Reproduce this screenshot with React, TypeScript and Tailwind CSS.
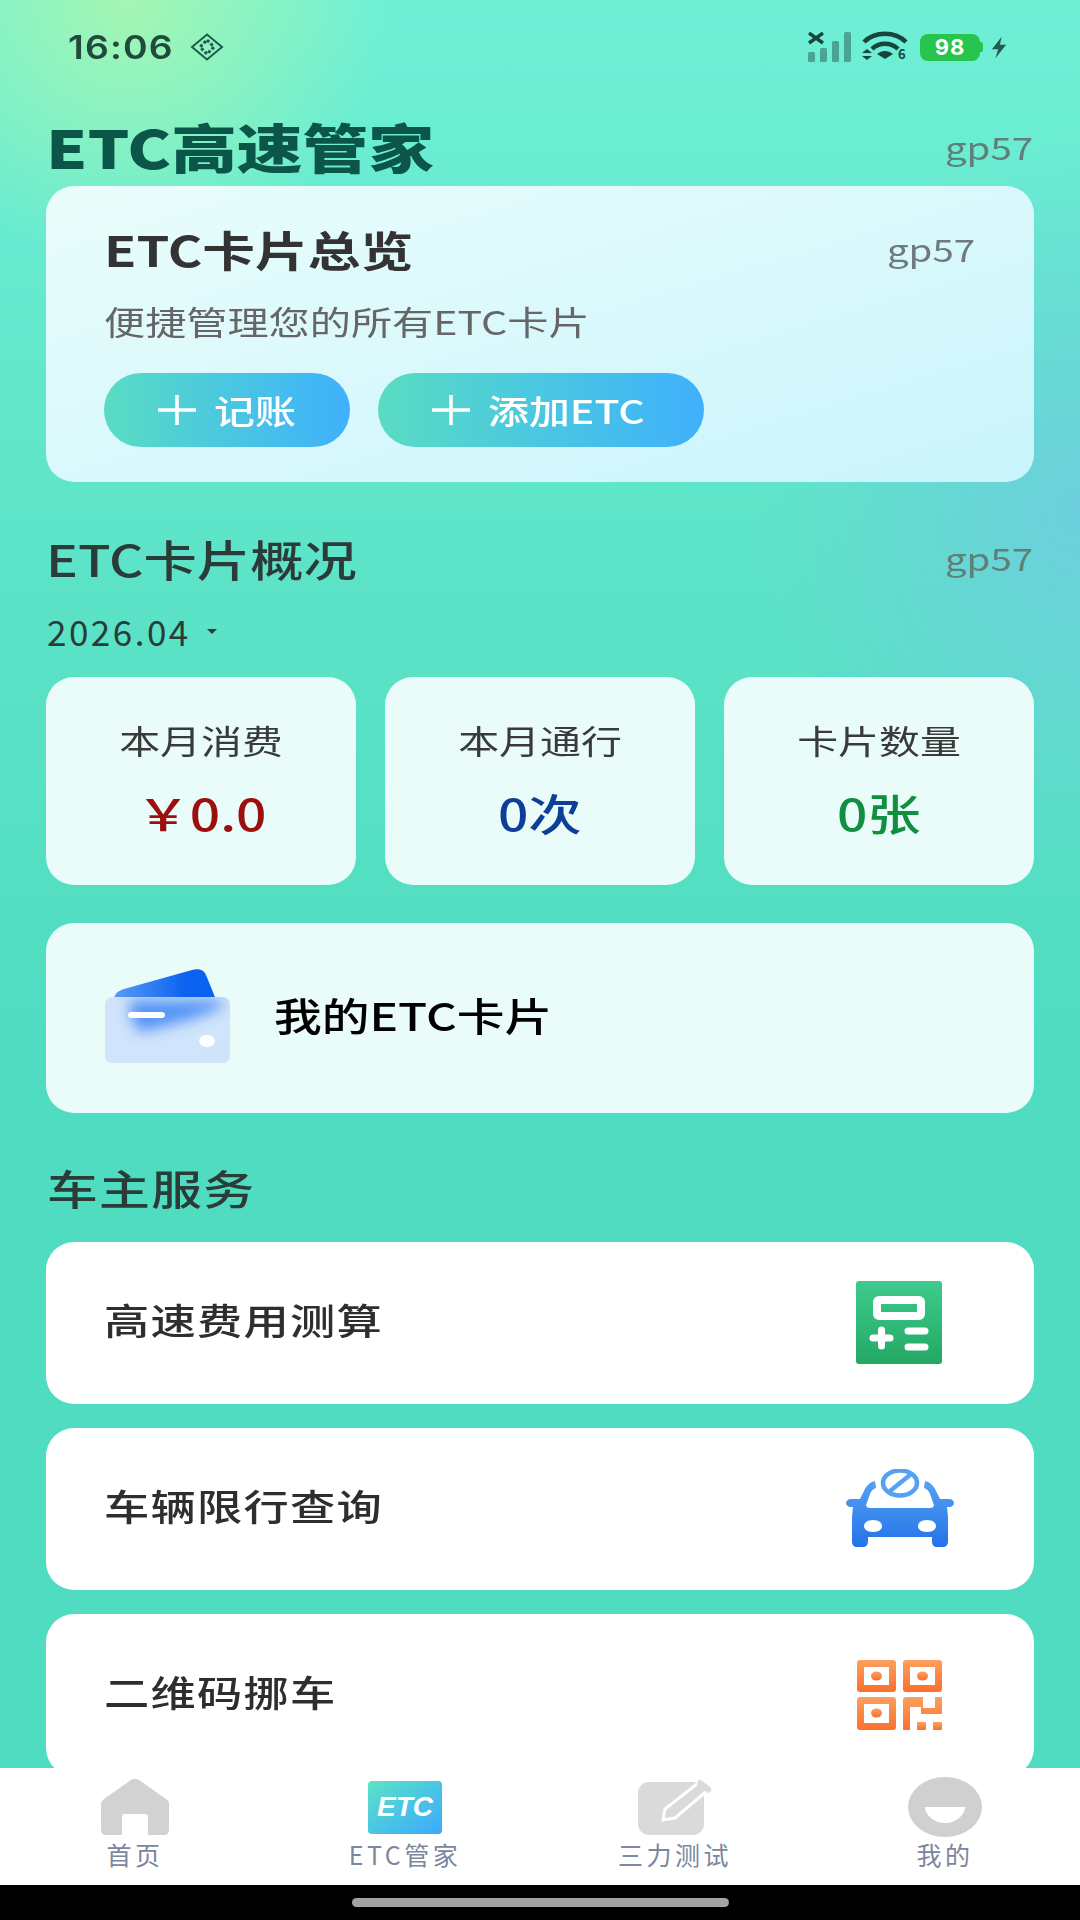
import type { ReactNode } from 'react';

const font = 'font-["Noto_Sans_CJK_SC","Noto_Sans",sans-serif]';

// screenshot text is stretched sideways, so the words get a scale around their anchor
function Left({ className, children }: { className: string; children: ReactNode }) {
  return <span className={`inline-block origin-left scale-x-[1.24] whitespace-nowrap ${className}`}>{children}</span>;
}

function Right({ className, children }: { className: string; children: ReactNode }) {
  return <span className={`inline-block origin-right scale-x-[1.24] whitespace-nowrap ${className}`}>{children}</span>;
}

function Mid({ className, children }: { className: string; children: ReactNode }) {
  return <span className={`inline-block origin-center scale-x-[1.24] whitespace-nowrap ${className}`}>{children}</span>;
}

function StatusBar() {
  return (
    <div className="flex h-[94px] items-center justify-between pl-[68px] pr-[73px]">
      <div className="flex items-center">
        <span className="w-[122px] origin-left scale-x-[1.13] text-[33px] font-semibold leading-none tracking-[1px] text-[#1f4a3c]" style={{ fontFamily: 'Inter, sans-serif' }}>16:06</span>
        <svg width="34" height="28" viewBox="0 0 34 28" fill="none" stroke="#1f5a4c" strokeWidth="2">
          <path d="M17 1.500 32 14 17 26.500 2 14Z" />
          <path d="M17 7 24 14 17 21 10 14Z" strokeWidth="3" strokeDasharray="3 2" />
        </svg>
      </div>
      <div className="flex items-center">
        <svg width="43" height="30" viewBox="0 0 43 30">
          <rect x="0" y="20" width="7" height="10" rx="1.500" fill="#4aa394" />
          <rect x="12" y="16" width="7" height="14" rx="1.500" fill="#4aa394" />
          <rect x="24" y="9" width="7" height="21" rx="1.500" fill="#4aa394" />
          <rect x="36" y="0" width="7" height="30" rx="1.500" fill="#4aa394" />
          <path d="M1 1 15 11M15 1 1 11" stroke="#17453c" strokeWidth="3.400" />
        </svg>
        <svg width="48" height="36" viewBox="0 -3 48 36" className="ml-[11px]">
          <path d="M2 10C13-1 33-1 44 10" fill="none" stroke="#17453c" strokeWidth="4.500" />
          <path d="M10 17C17 10 29 10 36 17" fill="none" stroke="#17453c" strokeWidth="4.500" />
          <path d="M15 22C20 18 26 18 31 22L23 27Z" fill="#17453c" />
          <path d="M0 21 5 17 10 21ZM0 24 5 28 10 24Z" fill="#17453c" />
          <text x="36" y="27" fontSize="13" fontWeight="700" fill="#17453c">6</text>
        </svg>
        <div className="ml-[10px] flex items-center">
          <div className="flex h-[27px] w-[60px] items-center justify-center rounded-[8px] bg-[#27c44f] text-[22px] font-bold tracking-[1px] text-white" style={{ fontFamily: 'Inter, sans-serif' }}>98</div>
          <div className="h-[10px] w-[3px] rounded-r-[2px] bg-[#27c44f]" />
        </div>
        <svg width="16" height="25" viewBox="0 0 18 26" className="ml-[8px]">
          <path d="M12 1 1 15H8L5 25 17 10H10Z" fill="#245a50" />
        </svg>
      </div>
    </div>
  );
}

function PlusIcon() {
  return (
    <svg width="38" height="30" viewBox="0 0 38 30" stroke="#fff" strokeWidth="3.600">
      <path d="M0 15H38M19 0V30" />
    </svg>
  );
}

function AddButton({ label, w }: { label: string; w: string }) {
  return (
    <div className={`flex h-[74px] items-center rounded-full bg-gradient-to-r from-[#5adcc2] to-[#40b0fc] pl-[54px] ${w}`}>
      <PlusIcon />
      <span className="ml-[18px] text-[33px] font-medium leading-none">
        <Left className="text-white">{label}</Left>
      </span>
    </div>
  );
}

function Stat({ label, value, color }: { label: string; value: string; color: string }) {
  return (
    <div className="flex h-[208px] flex-col items-center rounded-[28px] bg-[#e9fcf9] pt-[43px]">
      <Mid className="text-[33px] leading-[40px] text-[#3a3a3a]">{label}</Mid>
      <Mid className={`mt-[27px] text-[43px] font-medium leading-[50px] ${color}`}>{value}</Mid>
    </div>
  );
}

function WalletIcon() {
  return (
    <svg width="128" height="100" viewBox="0 0 128 100">
      <defs>
        <linearGradient id="back" x1="0" y1="0" x2="1" y2="0">
          <stop offset="0" stopColor="#5a9af5" />
          <stop offset="0.7" stopColor="#0a62f0" />
        </linearGradient>
        <linearGradient id="front" x1="0" y1="0" x2="1" y2="1">
          <stop offset="0" stopColor="#d2e4fb" />
          <stop offset="1" stopColor="#cfe4fb" />
        </linearGradient>
        <filter id="soft" x="-30%" y="-60%" width="160%" height="220%">
          <feGaussianBlur stdDeviation="7" />
        </filter>
        <clipPath id="frontClip">
          <rect x="1" y="29" width="125" height="66" rx="7" />
        </clipPath>
      </defs>
      <path d="M10 32C10 26 14 23 20 21L88 2C95 0 100 2 102 7L113 34H10Z" fill="url(#back)" />
      <rect x="1" y="29" width="125" height="66" rx="7" fill="url(#front)" />
      <g clipPath="url(#frontClip)">
        <path d="M26 32H118V38C100 50 62 58 36 64 28 56 24 42 26 32Z" fill="#3c86f4" filter="url(#soft)" opacity="0.85" />
      </g>
      <rect x="24" y="44" width="37" height="6" rx="3" fill="#fff" />
      <ellipse cx="103" cy="73" rx="8" ry="6" fill="#fff" />
    </svg>
  );
}

function CalcIcon() {
  return (
    <svg width="86" height="84" viewBox="0 0 86 84" className="-ml-[2px]">
      <defs>
        <linearGradient id="calc" x1="0" y1="0" x2="0" y2="1">
          <stop offset="0" stopColor="#3ecb8d" />
          <stop offset="1" stopColor="#23a863" />
        </linearGradient>
      </defs>
      <rect width="86" height="83" rx="3" fill="url(#calc)" />
      <rect x="21" y="19" width="44" height="16" rx="2" fill="none" stroke="#fff" strokeWidth="8" />
      <path d="M17 57H34M25.500 49V65" stroke="#fff" strokeWidth="7" strokeLinecap="round" />
      <path d="M52 50H69M52 66H69" stroke="#fff" strokeWidth="7" strokeLinecap="round" />
    </svg>
  );
}

function CarIcon() {
  return (
    <svg width="108" height="80" viewBox="0 0 108 80">
      <defs>
        <linearGradient id="car" x1="0" y1="0" x2="0" y2="1">
          <stop offset="0" stopColor="#55a2f2" />
          <stop offset="1" stopColor="#2472e8" />
        </linearGradient>
      </defs>
      <path
        fillRule="evenodd"
        fill="url(#car)"
        d="M29 12C24 13 20 17 18 22L14 30H5C2 30 0 32 0 34S2 38 5 38H7L6 48V72C6 76 8 78 11 78H17C20 78 22 76 22 72V68H86V72C86 76 88 78 91 78H97C100 78 102 76 102 72V48L101 38H103C106 38 108 36 108 34S106 30 103 30H94L90 22C88 17 84 13 79 12L78 19C81 20 83 22 84 25L88 36C88 38 86 39 84 39H24C22 39 20 38 20 36L24 25C25 22 27 20 30 19ZM27 51C33 51 36 54 36 57S33 63 27 63 18 60 18 57 21 51 27 51ZM81 51C87 51 90 54 90 57S87 63 81 63 72 60 72 57 75 51 81 51Z"
      />
      <ellipse cx="54" cy="14" rx="17" ry="12.500" fill="none" stroke="#55a2f2" strokeWidth="4.500" />
      <path d="M44 22 64 6" stroke="#55a2f2" strokeWidth="4.500" />
    </svg>
  );
}

function QrIcon() {
  return (
    <svg width="86" height="70" viewBox="0 0 86 70">
      <defs>
        <linearGradient id="qr" x1="0" y1="0" x2="0" y2="1">
          <stop offset="0" stopColor="#fca060" />
          <stop offset="1" stopColor="#fb6f2c" />
        </linearGradient>
      </defs>
      <g fill="url(#qr)">
        <path fillRule="evenodd" d="M3 0H36C38 0 39 1 39 3V29C39 31 38 32 36 32H3C1 32 0 31 0 29V3C0 1 1 0 3 0ZM7 7V25H32V7Z" />
        <ellipse cx="19.500" cy="16" rx="5.500" ry="4.500" />
        <path fillRule="evenodd" d="M49 0H82C84 0 85 1 85 3V29C85 31 84 32 82 32H49C47 32 46 31 46 29V3C46 1 47 0 49 0ZM53 7V25H78V7Z" />
        <ellipse cx="65.500" cy="16" rx="5.500" ry="4.500" />
        <path fillRule="evenodd" d="M3 37H36C38 37 39 38 39 40V67C39 69 38 70 36 70H3C1 70 0 69 0 67V40C0 38 1 37 3 37ZM7 44V63H32V44Z" />
        <ellipse cx="19.500" cy="53" rx="5.500" ry="4.500" />
        <path d="M46 70V40C46 38 47 37 49 37H66V48H78V37H85V54H64V47H53V70Z" />
        <rect x="60" y="62" width="9" height="8" rx="1" />
        <rect x="76" y="62" width="9" height="8" rx="1" />
      </g>
    </svg>
  );
}

function ServiceRow({ label, icon }: { label: string; icon: ReactNode }) {
  return (
    <div className="flex h-[162px] shrink-0 items-center justify-between rounded-[28px] bg-white pl-[58px]">
      <Left className="-mt-[6px] text-[36.500px] font-medium leading-none tracking-[1px] text-[#2e2e2e]">{label}</Left>
      <div className="flex w-[268px] justify-center">{icon}</div>
    </div>
  );
}

function TabItem({ label, icon }: { label: string; icon: ReactNode }) {
  return (
    <div className="flex flex-col items-center">
      <div className="flex h-[60px] items-center justify-center">{icon}</div>
      <span className="mt-[2px] whitespace-nowrap text-[25px] leading-[30px] tracking-[3.500px] text-[#7c869c]">{label}</span>
    </div>
  );
}

export default function App() {
  return (
    <div className={`flex h-[1920px] w-[1080px] flex-col overflow-hidden bg-black ${font}`}>
      <div className="h-[1768px] overflow-hidden bg-[radial-gradient(circle_at_12%_0%,#a4f6b2_0,#a4f6b200_260px),radial-gradient(ellipse_at_100%_29%,#6ccfdc_0,#6ccfdc00_320px),linear-gradient(180deg,#6ff0d6_0%,#5ee4c8_30%,#4fdcc0_60%,#4fdcc0_100%)]">
        <StatusBar />

        <div className="flex items-center justify-between pl-[46px] pr-[47px] pt-[25px]">
          <Left className="text-[53px] font-black leading-[54px] text-[#0b5549]">ETC高速管家</Left>
          <Right className="mt-[1px] text-[31px] leading-[40px] text-[#5f7f78]">gp57</Right>
        </div>

        <div className="mx-[46px] mt-[13px] h-[296px] rounded-[28px] bg-gradient-to-br from-[#eafdfb] to-[#c9f4fb] pl-[58px] pr-[59px] pt-[34px]">
          <div className="flex items-center justify-between">
            <Left className="text-[42.500px] font-bold leading-[58px] text-[#333333]">ETC卡片总览</Left>
            <Right className="text-[31px] leading-[40px] text-[#6f7a7c]">gp57</Right>
          </div>
          <div className="mt-[19px] h-[48px]">
            <Left className="text-[33.200px] leading-[48px] text-[#666666]">便捷管理您的所有ETC卡片</Left>
          </div>
          <div className="mt-[28px] flex gap-[28px]">
            <AddButton label="记账" w="w-[246px]" />
            <AddButton label="添加ETC" w="w-[326px]" />
          </div>
        </div>

        <div className="mt-[48px] flex items-center justify-between pl-[46px] pr-[47px]">
          <Left className="text-[43px] font-medium leading-[56px] text-[#2a3b38]">ETC卡片概况</Left>
          <Right className="text-[31px] leading-[40px] text-[#5f7f78]">gp57</Right>
        </div>

        <div className="mt-[24px] flex h-[40px] items-center pl-[47px]">
          <span className="text-[35px] leading-none tracking-[2.500px] text-[#2a3b38]">2026.04</span>
          <span className="ml-[16px] mt-[2px] h-0 w-0 border-x-[5px] border-t-[5px] border-x-transparent border-t-[#2a3b38]" />
        </div>

        <div className="mx-[46px] mt-[27px] grid grid-cols-3 gap-[29px]">
          <Stat label="本月消费" value="￥0.0" color="text-[#9c0f0f]" />
          <Stat label="本月通行" value="0次" color="text-[#0d3f9a]" />
          <Stat label="卡片数量" value="0张" color="text-[#0f8f3f]" />
        </div>

        <div className="mx-[46px] mt-[38px] flex h-[190px] items-center rounded-[28px] bg-[#e9fcf9] pl-[58px]">
          <WalletIcon />
          <div className="-mt-[5px] ml-[42px]">
            <Left className="text-[38.500px] font-medium leading-none text-black">我的ETC卡片</Left>
          </div>
        </div>

        <div className="mt-[46px] pl-[47px]">
          <Left className="text-[41px] font-medium leading-[56px] tracking-[1px] text-[#2a3b38]">车主服务</Left>
        </div>

        <div className="mx-[46px] mt-[27px] flex flex-col gap-[24px]">
          <ServiceRow label="高速费用测算" icon={<CalcIcon />} />
          <ServiceRow label="车辆限行查询" icon={<CarIcon />} />
          <ServiceRow label="二维码挪车" icon={<QrIcon />} />
        </div>
      </div>

      <div className="grid h-[117px] grid-cols-4 bg-white pt-[9px]">
        <TabItem
          label="首页"
          icon={
            <svg width="68" height="56" viewBox="0 0 68 56">
              <path d="M30 1C32-0.300 36-0.300 38 1L65 20C67 21.500 68 23 68 25V51C68 54 66 56 63 56H47V38C47 36 46 35 44 35H24C22 35 21 36 21 38V56H5C2 56 0 54 0 51V25C0 23 1 21.500 3 20Z" fill="#d2d2d2" />
            </svg>
          }
        />
        <TabItem
          label="ETC管家"
          icon={
            <div className="flex h-[53px] w-[74px] items-center justify-center rounded-[4px] bg-gradient-to-br from-[#5ee2c4] to-[#3ea8fc]">
              <span className="text-[28px] font-bold italic leading-none text-white" style={{ fontFamily: '"Liberation Sans", sans-serif' }}>ETC</span>
            </div>
          }
        />
        <TabItem
          label="三力测试"
          icon={
            <svg width="74" height="56" viewBox="0 0 74 56">
              <rect x="0" y="3" width="66" height="53" rx="11" fill="#dadada" />
              <path d="M25 41 27 30 60 4 70 11 37 39Z" fill="#dadada" stroke="#fff" strokeWidth="3" />
              <path d="M63 1 72 8C74 9.500 74 12 72 13L70 14 59 6 60 2C61 0.500 62 0.500 63 1Z" fill="#dadada" />
            </svg>
          }
        />
        <TabItem
          label="我的"
          icon={
            <svg width="74" height="60" viewBox="0 0 74 60">
              <ellipse cx="37" cy="30" rx="37" ry="30" fill="#d0d0d0" />
              <path d="M17 30H57C57 38 48 46 37 46S17 38 17 30Z" fill="#fff" />
            </svg>
          }
        />
      </div>

      <div className="flex flex-1 items-center justify-center">
        <div className="h-[9px] w-[377px] rounded-full bg-[#a3a3a3]" />
      </div>
    </div>
  );
}
